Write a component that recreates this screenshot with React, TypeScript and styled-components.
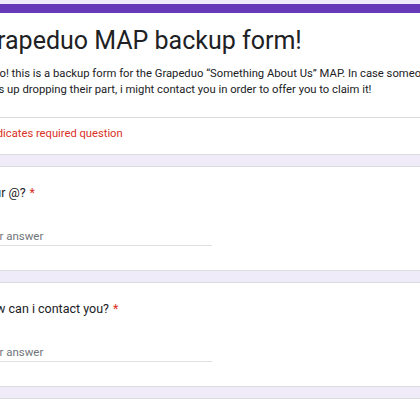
import React from 'react';
import styled, { createGlobalStyle } from 'styled-components';

const GlobalStyle = createGlobalStyle`
    html, body {
        margin: 0;
        padding: 0;
        background: rgb(240, 235, 248);
        overflow: hidden;
    }
    body {
        font-family: Roboto, "Liberation Sans", Arial, sans-serif;
        color: #202124;
    }
`

const FormWrapper = styled.main`
    display: flex;
    flex-direction: column;
    gap: 11px;
    padding-top: 4px;
    margin-left: -45px;
    width: 514px;
`

const Card = styled.section<{ $accent?: boolean }>`
    background: white;
    border: 1px solid #dadce0;
    border-top: ${p => (p.$accent ? '9px solid rgb(103, 58, 183)' : '1px solid #dadce0')};
    border-radius: 8px;
`

const HeaderBody = styled.div`
    padding: 12px 24px 19px;
    border-bottom: 1px solid #dadce0;
`

const Title = styled.h1`
    margin: 0;
    font-size: 25px;
    font-weight: 400;
    line-height: 32px;
`

const Description = styled.p`
    margin: 9px 0 0;
    font-size: 11.25px;
    line-height: 16px;
`

const Required = styled.div`
    padding: 8px 24px 12px;
    font-size: 11.2px;
    line-height: 16px;
    color: #d93025;
`

const QuestionBody = styled.div`
    padding: 16px 24px 24px;
`

const QuestionTitle = styled.div`
    font-size: 12.5px;
    line-height: 20px;
    span {
        color: #d93025;
        margin-left: 4px;
    }
`

const AnswerInput = styled.input`
    display: block;
    margin-top: 24px;
    width: 50%;
    height: 18px;
    padding: 0;
    border: none;
    border-bottom: 1px solid #e0e0e0;
    font-family: inherit;
    font-size: 11.5px;
    line-height: 18px;
    color: #202124;
    background: transparent;
    outline: none;
    &::placeholder {
        color: #70757a;
    }
`

const questions = ['Your @?', 'How can i contact you?']

const App = () => {
    return (
        <>
            <GlobalStyle />
            <FormWrapper>
                <Card $accent>
                    <HeaderBody>
                        <Title>Grapeduo MAP backup form!</Title>
                        <Description>
                            Hello! this is a backup form for the Grapeduo “Something About Us” MAP. In case someone ends up dropping their part, i might contact you in order to offer you to claim it!
                        </Description>
                    </HeaderBody>
                    <Required>* Indicates required question</Required>
                </Card>
                {questions.map(q => (
                    <Card key={q}>
                        <QuestionBody>
                            <QuestionTitle>
                                {q}<span>*</span>
                            </QuestionTitle>
                            <AnswerInput placeholder="Your answer" />
                        </QuestionBody>
                    </Card>
                ))}
                <Card>
                    <QuestionBody />
                </Card>
            </FormWrapper>
        </>
    )
}

export default App
